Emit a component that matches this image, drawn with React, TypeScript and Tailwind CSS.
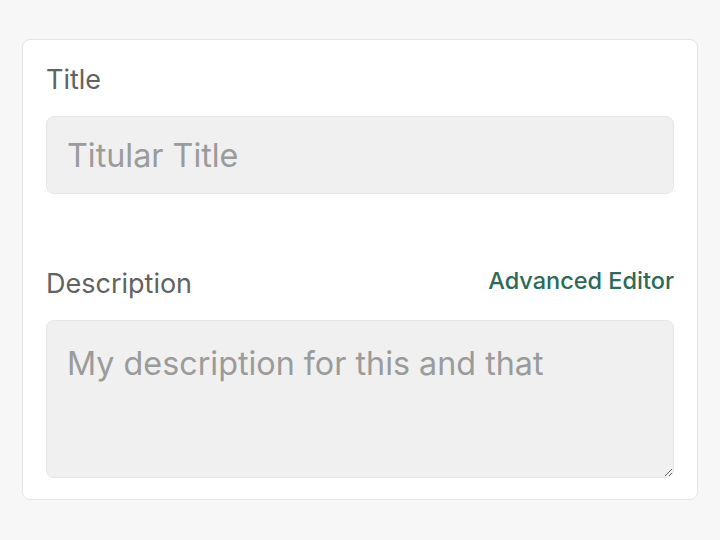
import React from "react";

export default function App() {
  return (
    <div
      className="w-[720px] h-[540px] bg-[#f7f7f7] pt-[39px] px-[22px]"
      style={{ fontFamily: "Inter, 'Noto Sans', sans-serif" }}
    >
      <div className="w-[676px] h-[461px] bg-white border border-[#e6e6e6] rounded-[8px] px-[23px] pt-[20px]">
        <label className="block text-[27px] leading-[40px] text-[#5f6361]">Title</label>
        <input
          className="mt-[16px] block w-full h-[78px] rounded-[8px] bg-[#f0f0f0] border border-[#e6e6e6] px-[20px] text-[32.3px] text-[#333] placeholder:text-[#9b9b9b] outline-none"
          placeholder="Titular Title"
        />
        <div className="mt-[69px] flex items-end justify-between">
          <label className="block text-[27px] leading-[40px] text-[#5f6361]">Description</label>
          <span className="mb-[5px] text-[23.5px] leading-[36px] font-medium text-[#2b6b58]">Advanced Editor</span>
        </div>
        <textarea
          className="mt-[16px] block w-full h-[158px] rounded-[8px] bg-[#f0f0f0] border border-[#e6e6e6] px-[20px] py-[19px] text-[32.3px] text-[#333] placeholder:text-[#9b9b9b] outline-none"
          placeholder="My description for this and that"
        />
      </div>
    </div>
  );
}
